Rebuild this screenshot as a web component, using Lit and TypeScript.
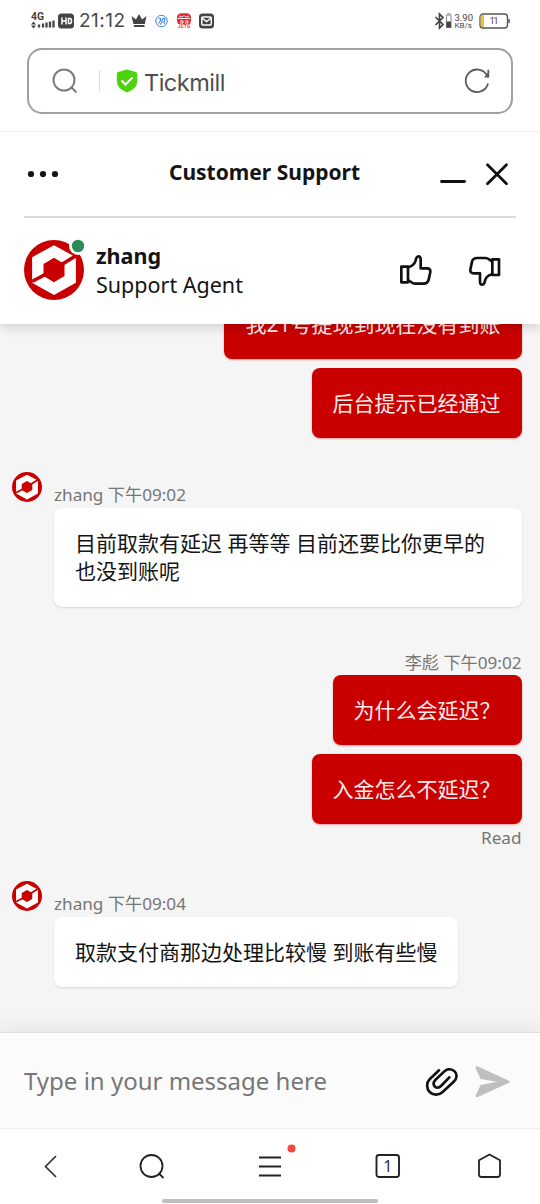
import { LitElement, html, css, svg } from "lit";
import { customElement, property } from "lit/decorators.js";

@customElement("brand-logo")
class BrandLogo extends LitElement {
  @property({ type: Boolean }) online = false;
  static styles = css`
    :host { display: block; }
    svg { display: block; width: 100%; height: 100%; overflow: visible; }
  `;
  render() {
    return html`<svg viewBox="0 0 60 60">
      <circle cx="30" cy="30" r="30" fill="#c90000" />
      <path d="M30 5.3 51.9 17.2V42.8L30 54.9 8.1 42.8V17.2Z" fill="#fff" />
      <path d="M54 14.5 36 25.5M8 41.5 24 33" stroke="#c90000" stroke-width="3.600" />
      <path d="M30 17.8 40.5 24V36L30 42.2 19.5 36V24Z" fill="#c90000" />
      ${this.online
        ? svg`<circle cx="54" cy="6" r="9" fill="#fff"/><circle cx="54" cy="6" r="6.2" fill="#2b8a55"/>`
        : null}
    </svg>`;
  }
}

@customElement("app-root")
class AppRoot extends LitElement {
  static styles = css`
    :host {
      display: flex; flex-direction: column; width: 540px; height: 1204px; overflow: hidden;
      background: #fff; color: #141414;
      font-family: "Noto Sans", "Noto Sans CJK SC", sans-serif;
    }
    * { box-sizing: border-box; }
    svg { display: block; flex: none; overflow: visible; }
    .status { height: 48px; flex: none; display: flex; align-items: flex-start; padding: 10px 30px 0 31px; color: #444; }
    .status svg { height: 22px; }
    .signal { width: 45px; }
    .clock { font: 19px/22px Inter, sans-serif; letter-spacing: .5px; width: 51px; padding: 0 0 0 3px; white-space: nowrap; color: #484848; }
    .spacer { flex: 1; }
    .search { margin: 0 27px; height: 66px; flex: none; border: 2px solid #a0a0a0; border-radius: 15px; display: flex; align-items: center; padding: 0 21px 0 23px; }
    .sep { width: 1px; height: 22px; background: #ddd; margin: 0 16px 0 21px; }
    .site { flex: 1; font: 23.5px/30px Inter, sans-serif; letter-spacing: -.5px; color: #505050; margin-left: 6px; padding-top: 3px; }
    .head { margin-top: 17px; border-top: 1px solid #f0f0f0; height: 193px; flex: none; padding: 0 24px; position: relative; z-index: 1; background: #fff; box-shadow: 0 2px 12px rgba(0,0,0,.18); clip-path: inset(0 0 -20px 0); }
    .bar { height: 86px; border-bottom: 2px solid #d9d9d9; display: flex; align-items: center; }
    .title { flex: 1; text-align: center; font-size: 21px; line-height: 28px; font-weight: 700; padding: 0 0 4px 27px; }
    .agent { display: flex; align-items: center; height: 104px; }
    .logo { width: 60px; height: 60px; }
    .who { flex: 1; font-size: 21.5px; line-height: 29px; padding: 0 0 1px 12px; }
    .who b { display: block; }
    .up { margin-right: 35px; }
    .down { margin-right: 14px; }
    .chat { flex: 1; min-height: 0; overflow: hidden; background: #f5f5f5; display: flex; flex-direction: column; justify-content: flex-end; padding: 0 18.5px 45px 12px; }
    .chat > * { flex: none; }
    .mine { display: flex; flex-direction: column; align-items: flex-end; }
    .bubble { border-radius: 8px; padding: 20.75px 21px; font-size: 21px; line-height: 28.5px; white-space: nowrap; box-shadow: 0 1px 2px rgba(0,0,0,.12); background: #fff; }
    .mine .bubble { background: #c90000; color: #ffecec; box-shadow: 0 1px 2px rgba(201,0,0,.35); }
    .mine .bubble + .bubble { margin-top: 9px; }
    .meta { font-size: 17.15px; line-height: 23px; height: 24px; color: #767676; }
    .theirs { display: flex; align-items: flex-start; }
    .theirs .meta { line-height: 22px; }
    .mini { width: 30px; height: 30px; margin-right: 12px; }
    .body { padding-top: 12px; display: flex; flex-direction: column; align-items: flex-start; }
    .g2 { margin-top: 34px; }
    .g3 { margin-top: 44.5px; }
    .read { margin-top: 2px; }
    .g4 { margin-top: 31px; }
    .compose { height: 97px; flex: none; background: #fbfbfb; border-top: 1px solid #dedede; border-bottom: 1px solid #f0f0f0; box-shadow: 0 0 24px rgba(0,0,0,.1); position: relative; display: flex; align-items: center; padding: 0 30px 0 24px; }
    .hint { flex: 1; font-size: 24px; line-height: 32px; color: #777; }
    .compose svg { margin-top: 3px; }
    .send { margin-left: 16px; }
    .nav { height: 75px; flex: none; background: #fff; position: relative; display: flex; flex-direction: column; justify-content: space-between; }
    .nav .keys { display: flex; padding: 18px 0 0 43px; }
    .home { width: 216px; height: 4px; border-radius: 2px; background: #bfbfbf; margin: 0 auto; margin-bottom: 1px; }
    .k2 { margin-left: 82px; }
    .k3 { margin-left: 94px; }
    .k4 { margin-left: 82px; }
    .k5 { margin-left: 75px; }
  `;

  render() {
    return html`
      <div class="status">
        <svg class="signal" viewBox="0 0 45 22" fill="#444">
          <text x="0" y="10" font-family="Roboto" font-weight="700" font-size="10" textLength="13" lengthAdjust="spacingAndGlyphs">4G</text>
          <path d="M0 14.5 2.5 11.5 5 14.5ZM0 15.5H5L2.5 18.5Z" />
          <path d="M8 14.500v3M12 13.500v4M15.500 12.500v5M19 11.500v6M22.500 10.500v7" stroke="#444" stroke-width="2.300" />
          <rect x="27" y="3.500" width="16" height="15" rx="3.500" />
          <path d="M31 7.500v7M35 7.500v7M31 11h4M37.500 8.500h1.500q1.500 0 1.500 2.500t-1.500 2.500h-1.500Z" stroke="#fff" stroke-width="1.500" fill="none" />
        </svg>
        <span class="clock">21:12</span>
        <svg width="90" viewBox="0 0 90 22">
          <path d="M4.500 6 9 9.500 12 4 15 9.500 19.500 6 17.800 14H6.400ZM6.800 15H17.500V17H6.800Z" fill="#444" />
          <circle cx="34.500" cy="11" r="5.700" fill="none" stroke="#3e7ddd" stroke-width="1" />
          <path d="M31.500 8.500q2.500-1 2 1.500t-2 3.500M33 14.500q2-1 2.200-4t2.500-2q.8 2-.5 3t1 2" fill="none" stroke="#3e7ddd" stroke-width="1.100" />
          <path d="M50 11q-1-7.500 4-7.700h6q5 .2 4 7.700l-1 3h-12Z" fill="#df2b34" />
          <path d="M50.500 8.500h13M52 6q2 2 4.500 0M57.500 6q2.500 2 4.500 0M53 11h3v2h-3M58 11h3v2h-3" fill="none" stroke="#fff" stroke-width=".9" />
          <text x="51" y="18.300" font-family="Roboto" font-weight="700" font-size="4.500" fill="#df2b34" textLength="12">JCTG</text>
          <rect x="72" y="3.500" width="15" height="15" rx="3.500" fill="#444" />
          <rect x="74.800" y="7" width="9.500" height="8" rx="1" fill="none" stroke="#fff" stroke-width="1.500" />
          <path d="M75 8 79.500 11.500 84 8" fill="none" stroke="#fff" stroke-width="1.500" />
        </svg>
        <span class="spacer"></span>
        <svg width="76" viewBox="0 0 76 22">
          <path d="M1.500 7 9 14.500 5.500 18V4L9 7.500 1.500 15" fill="none" stroke="#444" stroke-width="1.700" />
          <rect x="12.500" y="5" width="4.500" height="12.500" fill="none" stroke="#888" stroke-width="1" />
          <path d="M13.300 3.800h3" stroke="#888" />
          <rect x="12.500" y="11.500" width="4.500" height="6" fill="#444" />
          <text x="20.500" y="10.500" font-family="Roboto" font-size="9" fill="#444" textLength="18.500" lengthAdjust="spacingAndGlyphs">3.90</text>
          <text x="20.500" y="18.300" font-family="Roboto" font-size="7.500" fill="#444" textLength="17.500" lengthAdjust="spacingAndGlyphs">KB/s</text>
          <rect x="46" y="4" width="27.500" height="14" rx="3" fill="#fff" stroke="#555" stroke-width="1.300" />
          <path d="M50 4.800H48.500q-1.800 0-1.800 1.700v9q0 1.700 1.800 1.700h1.500Z" fill="#f2bd32" />
          <path d="M75 9v4" stroke="#555" stroke-width="1.500" />
          <text x="55.500" y="14.300" font-family="Roboto" font-size="9.500" fill="#444" textLength="9">11</text>
        </svg>
      </div>

      <div class="search">
        <svg width="26" height="26" viewBox="0 0 26 26" fill="none" stroke="#7b7b7b" stroke-width="2">
          <circle cx="12" cy="12" r="10.500" /><path d="M19.500 19.500 24.500 24.500" />
        </svg>
        <span class="sep"></span>
        <svg width="22" height="24" viewBox="0 0 22 24">
          <path d="M11 .5 20 3q1.300.4 1.300 1.800V12q0 7.500-10.300 11.500Q.8 19.500.8 12V4.800Q.8 3.400 2 3Z" fill="#4cd30c" />
          <path d="M5.500 11.500 9.500 15.500 16.500 8.500" fill="none" stroke="#fff" stroke-width="2" />
        </svg>
        <span class="site">Tickmill</span>
        <svg width="26" height="26" viewBox="0 0 26 26" fill="none" stroke="#5c5c5c" stroke-width="1.800">
          <path d="M23 7.500A11.300 11.300 0 1 0 24 15.500M24.300 1.800V9.500" /><path d="M24.500 4V9.500H20Z" fill="#5c5c5c" stroke="none" />
        </svg>
      </div>

      <div class="head">
        <div class="bar">
          <svg width="38" height="10" viewBox="0 0 38 10" fill="#141414">
            <circle cx="7" cy="5" r="3.100" /><circle cx="19" cy="5" r="3.100" /><circle cx="31" cy="5" r="3.100" />
          </svg>
          <span class="title">Customer Support</span>
          <svg width="76" height="28" viewBox="0 0 76 28" fill="none" stroke="#101010" stroke-width="2.800" stroke-linecap="round">
            <path d="M1.500 21.500H24.500M47.500 4.800 66.500 23.800M66.500 4.800 47.500 23.800" />
          </svg>
        </div>
        <div class="agent">
          <brand-logo class="logo" online></brand-logo>
          <div class="who"><b>zhang</b>Support Agent</div>
          <svg class="up" width="34" height="32" viewBox="388 372 102 96" fill="none" stroke="#111" stroke-width="8" stroke-linejoin="round">
            <path d="M395 410H415V457H395Z" />
            <path d="M416 412Q433 406 437 394L440 384Q442 379 447 379T453 387V415H472Q483 415 482 426L477 449Q474 461 462 461H436Q430 461 426 457L416 451" />
          </svg>
          <svg class="down" width="34" height="32" viewBox="596 372 102 96" fill="none" stroke="#111" stroke-width="8" stroke-linejoin="round">
            <path d="M669 388H689V435H669Z" />
            <path d="M668 433Q652 438 648 449L645 459Q643 464 638 464T632 457V430H613Q602 430 603 419L608 395Q611 384 623 384H648Q655 384 659 388L668 394" />
          </svg>
        </div>
      </div>

      <div class="chat">
        <div class="mine">
          <div class="bubble">我21号提现到现在没有到账</div>
          <div class="bubble">后台提示已经通过</div>
        </div>
        <div class="theirs g2">
          <brand-logo class="mini"></brand-logo>
          <div class="body">
            <div class="meta">zhang 下午09:02</div>
            <div class="bubble" style="width:467.5px">目前取款有延迟 再等等 目前还要比你更早的<br>也没到账呢</div>
          </div>
        </div>
        <div class="mine g3">
          <div class="meta">李彪 下午09:02</div>
          <div class="bubble">为什么会延迟？</div>
          <div class="bubble">入金怎么不延迟？</div>
          <div class="meta read">Read</div>
        </div>
        <div class="theirs g4">
          <brand-logo class="mini"></brand-logo>
          <div class="body">
            <div class="meta">zhang 下午09:04</div>
            <div class="bubble">取款支付商那边处理比较慢 到账有些慢</div>
          </div>
        </div>
      </div>

      <div class="compose">
        <span class="hint">Type in your message here</span>
        <svg width="34" height="30" viewBox="135 141 102 90" fill="none" stroke="#111" stroke-width="8" stroke-linecap="round" stroke-linejoin="round">
          <path d="M177 151 149 178C139 188 139 206 149 216S176 227 187 217L221 185C232 175 232 162 224 154S202 145 193 154L165 181C159 188 160 196 165 200S177 204 183 198L208 172" />
        </svg>
        <svg class="send" width="35" height="32" viewBox="286 137 105 96" fill="#bfbfbf">
          <path d="M293 138 388 181Q391 184 388 187L293 231Q286 232 288 225L303 194 352 184 303 176 288 144Q286 137 293 138Z" />
        </svg>
      </div>

      <div class="nav">
        <div class="keys">
          <svg width="14" height="38" viewBox="0 0 14 38" fill="none" stroke="#333" stroke-width="1.700"><path d="M13 9 2.500 19.500 13 30" /></svg>
          <svg class="k2" width="26" height="38" viewBox="0 0 26 38" fill="none" stroke="#222" stroke-width="1.800"><circle cx="12.500" cy="19" r="11" /><path d="M19.500 26 24.500 31" /></svg>
          <svg class="k3" width="34" height="38" viewBox="0 0 34 38" fill="none" stroke="#222" stroke-width="1.800"><path d="M0 10.500H22M0 19.500H22M0 28.500H22" /><circle cx="32.500" cy="1.500" r="4" fill="#f04a3e" stroke="none" /></svg>
          <svg class="k4" width="26" height="38" viewBox="0 0 26 38"><rect x="1.500" y="8" width="22.500" height="22" rx="2.500" fill="none" stroke="#222" stroke-width="1.900" /><text x="12.800" y="24.500" text-anchor="middle" font-family="Noto Sans" font-size="16" fill="#333">1</text></svg>
          <svg class="k5" width="26" height="38" viewBox="0 0 26 38" fill="none" stroke="#222" stroke-width="1.800" stroke-linejoin="round"><path d="M13.500 7.500 24 13.200V27.500Q24 30 21.500 30H5.500Q3 30 3 27.500V13.200Z" /></svg>
        </div>
        <div class="home"></div>
      </div>
    `;
  }
}
